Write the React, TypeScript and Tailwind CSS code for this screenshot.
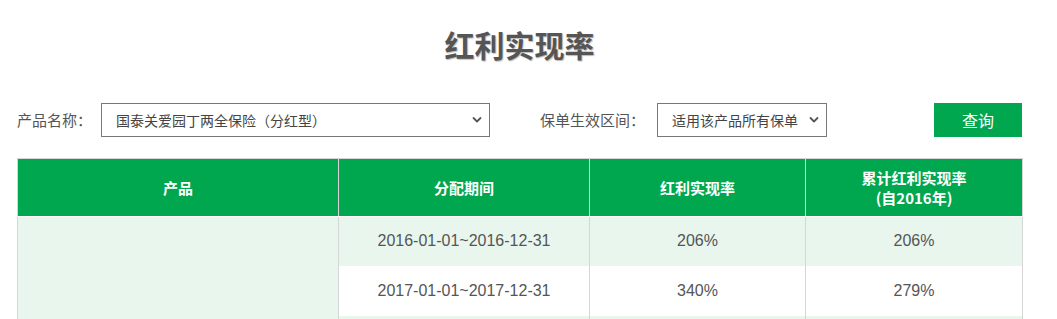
const rows = [
  { period: '2016-01-01~2016-12-31', rate: '206%', total: '206%' },
  { period: '2017-01-01~2017-12-31', rate: '340%', total: '279%' },
];

const Chevron = () => (
  <svg width="10" height="7" viewBox="0 0 10 7" className="pointer-events-none absolute right-[8px] top-1/2 -translate-y-1/2" fill="none">
    <path d="M1.5 1.5L5 5L8.5 1.5" stroke="#555" strokeWidth="1.8" strokeLinecap="round" strokeLinejoin="round" />
  </svg>
);

export default function App() {
  return (
    <div className="w-[1057px] h-[319px] overflow-hidden bg-white" style={{ fontFamily: '"Noto Sans CJK SC", "Liberation Sans", sans-serif' }}>
      <div className="ml-[17px] w-[1005px]">
        <h1 className="pt-[22px] h-[103px] text-center text-[30px] leading-[44px] font-bold text-[#555] [text-shadow:1px_1px_1px_#bbb]">
          红利实现率
        </h1>

        <div className="flex items-center h-[34px]">
          <span className="text-[15px] text-[#555] w-[84px]">产品名称：</span>
          <div className="relative">
            <select className="appearance-none w-[389px] h-[34px] border border-[#777] bg-white pl-[14px] text-[14px] text-[#444] outline-none">
              <option>国泰关爱园丁两全保险（分红型）</option>
            </select>
            <Chevron />
          </div>
          <span className="ml-[50px] text-[15px] text-[#555] w-[117px]">保单生效区间：</span>
          <div className="relative">
            <select className="appearance-none w-[170px] h-[34px] border border-[#777] bg-white pl-[14px] text-[14px] text-[#444] outline-none">
              <option>适用该产品所有保单</option>
            </select>
            <Chevron />
          </div>
          <button className="ml-auto w-[88px] h-[34px] bg-[#00a74f] text-white text-[16px]">查询</button>
        </div>

        <table className="mt-[21px] w-[1005px] border-collapse table-fixed">
          <colgroup>
            <col className="w-[321px]" />
            <col className="w-[251px]" />
            <col className="w-[216px]" />
            <col className="w-[217px]" />
          </colgroup>
          <thead>
            <tr className="h-[58px] bg-[#00a74f] text-white text-[15px] font-bold leading-[20px]">
              <th className="border border-[#d6d6d6] border-b-white">产品</th>
              <th className="border border-[#d6d6d6] border-b-white border-l-[#e6e6e6]">分配期间</th>
              <th className="border border-[#d6d6d6] border-b-white border-l-[#e6e6e6]">红利实现率</th>
              <th className="border border-[#d6d6d6] border-b-white border-l-[#e6e6e6]">
                累计红利实现率
                <br />
                (自2016年)
              </th>
            </tr>
          </thead>
          <tbody className="text-[16px] text-[#555]" style={{ fontFamily: '"Liberation Sans", Arial, sans-serif' }}>
            {rows.map((r, i) => (
              <tr key={r.period} className={`${i === 0 ? 'h-[49px] bg-[#e8f6ee]' : 'h-[50px] bg-white'}`}>
                {i === 0 && <td rowSpan={3} className="bg-[#e8f6ee] border-x border-[#d6d6d6]"></td>}
                <td className="text-center border-x border-[#d6d6d6]">{r.period}</td>
                <td className="text-center border-x border-[#d6d6d6]">{r.rate}</td>
                <td className="text-center border-x border-[#d6d6d6]">{r.total}</td>
              </tr>
            ))}
            <tr className="h-[50px] bg-[#e8f6ee]">
              <td className="border-x border-[#d6d6d6]"></td>
              <td className="border-x border-[#d6d6d6]"></td>
              <td className="border-x border-[#d6d6d6]"></td>
            </tr>
          </tbody>
        </table>
      </div>
    </div>
  );
}
